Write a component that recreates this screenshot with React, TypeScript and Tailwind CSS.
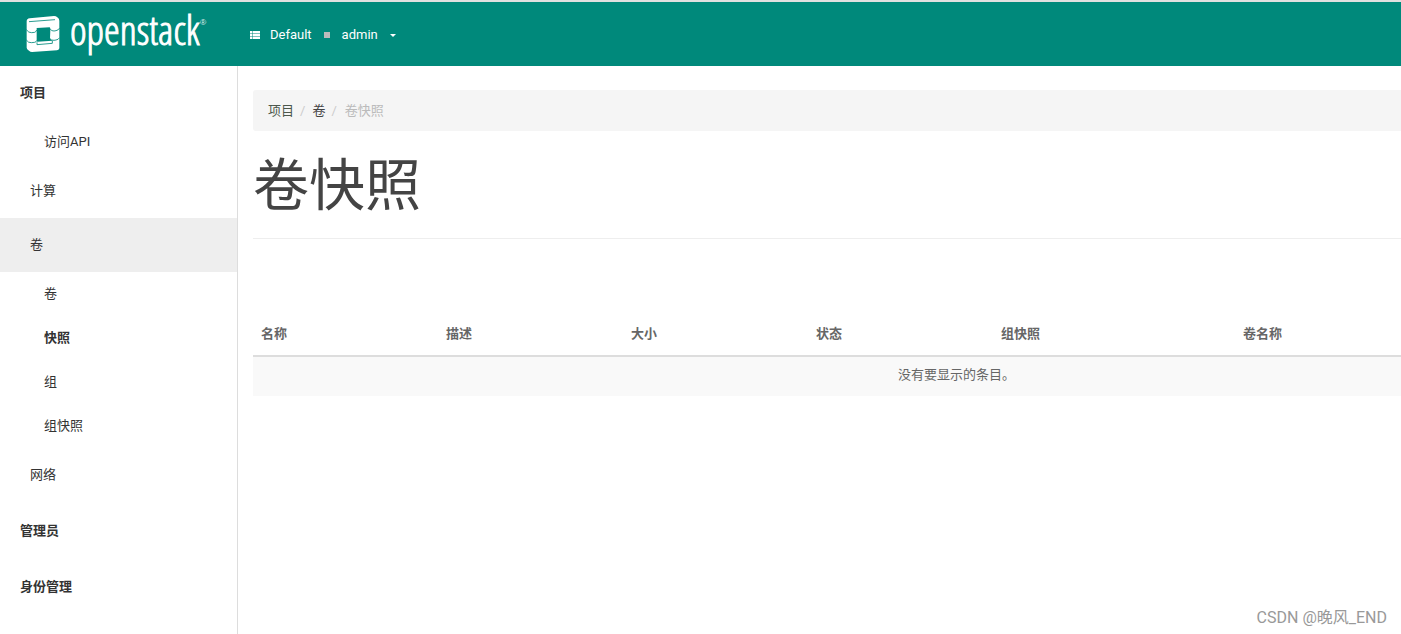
import React from 'react';

interface NavItem {
  label: string;
  kind: 'group' | 'section' | 'page';
  active?: boolean;
}

const projectItems: NavItem[] = [
  { label: '项目', kind: 'group' },
  { label: '访问API', kind: 'page' },
  { label: '计算', kind: 'section' },
  { label: '卷', kind: 'section', active: true },
  { label: '卷', kind: 'page' },
  { label: '快照', kind: 'page', active: true },
  { label: '组', kind: 'page' },
  { label: '组快照', kind: 'page' },
  { label: '网络', kind: 'section' },
];

const otherItems: NavItem[] = [
  { label: '管理员', kind: 'group' },
  { label: '身份管理', kind: 'group' },
];

const columns = [
  { label: '名称', width: 'w-[185px]' },
  { label: '描述', width: 'w-[185px]' },
  { label: '大小', width: 'w-[185px]' },
  { label: '状态', width: 'w-[185px]' },
  { label: '组快照', width: 'w-[242px]' },
  { label: '卷名称', width: '' },
];

const LogoMark: React.FC = () => (
  <svg viewBox="33 24 100 108" className="h-9 w-[34px] shrink-0" aria-hidden="true">
    <path
      fill="#fff"
      d="M34 40Q34 32 43 31L116 24Q122 24 126 28Q132 32 132 38V121Q132 126 125 127L50 132Q45 132 41 128Q34 124 34 119Z"
    />
    <path fill="#00897b" d="M64 60L103 58Q105 58 105 66L104 92L111 98L66 101L64 98Z" />
    <g fill="none" stroke="#00897b" strokeWidth="2.5">
      <path d="M41 41L119 35" />
      <path d="M33 65Q40 75 49 74L58 73Q62 72 64 66" />
      <path d="M104 62Q108 70 116 69L122 68Q129 67 133 60" />
      <path d="M33 96Q39 105 48 104L58 103Q63 102 65 97" />
      <path d="M103 91Q108 98 116 97L122 96Q129 95 133 89" />
      <path d="M65 103V110L111 106V98" />
    </g>
  </svg>
);

const Header: React.FC = () => (
  <header className="flex h-[66px] items-center border-t-2 border-[#e0e0e0] bg-[#00897b] text-white">
    <a href="#" className="ml-[26px] flex w-[188px] shrink-0 items-center gap-2.5" aria-label="openstack">
      <LogoMark />
      <span className="flex items-start pb-2 font-['Open_Sans_Condensed_Light','Roboto_Condensed','Lato',sans-serif] text-[40px] leading-9">
        <span className="[-webkit-text-stroke:1px_white]">openstack</span>
        <span className="text-[8px] leading-5">®</span>
      </span>
    </a>
    <button type="button" className="ml-9 flex items-center pt-0.5 text-[13px] leading-6">
      <svg viewBox="0 0 10 8" className="h-2 w-2.5" fill="#fff" aria-hidden="true">
        <path d="M0 0h2.5v2.3H0zM3 0h7v2.3H3zM0 2.8h2.5v2.3H0zM3 2.8h7v2.3H3zM0 5.6h2.5v2.3H0zM3 5.6h7v2.3H3z" />
      </svg>
      <span className="ml-2.5">Default</span>
      <span className="ml-3 h-1.5 w-1.5 bg-[#bbb]" />
      <span className="ml-3">admin</span>
      <svg viewBox="0 0 6 3" className="ml-3 h-[3px] w-1.5" fill="#fff" aria-hidden="true">
        <path d="M0 0h6L3 3z" />
      </svg>
    </button>
  </header>
);

const NavLink: React.FC<{ item: NavItem }> = ({ item }) => {
  const base = 'flex items-center text-[#333]';
  if (item.kind === 'group') {
    return <a href="#" className={`${base} h-[54px] pl-5 font-bold`}>{item.label}</a>;
  }
  if (item.kind === 'section') {
    return (
      <a href="#" className={`${base} h-[54px] pl-[30px] ${item.active ? 'bg-[#eee]' : ''}`}>
        {item.label}
      </a>
    );
  }
  return (
    <a href="#" className={`${base} h-11 pl-11 ${item.active ? 'font-bold' : ''}`}>
      {item.label}
    </a>
  );
};

const Sidebar: React.FC = () => (
  <nav className="w-[238px] shrink-0 border-r border-[#ddd]">
    {projectItems.map((item, index) => (
      <NavLink key={index} item={item} />
    ))}
    <div className="flex flex-col gap-0.5 pt-0.5">
      {otherItems.map(item => (
        <NavLink key={item.label} item={item} />
      ))}
    </div>
  </nav>
);

const Breadcrumb: React.FC = () => (
  <ol className="flex h-[41px] items-center rounded-l-[3px] bg-[#f5f5f5] pt-px pl-[15px]">
    <li><a href="#" className="text-[#4c584c]">项目</a></li>
    <li className="px-1.5 text-[#ccc]">/</li>
    <li className="pl-px"><a href="#" className="text-[#444]">卷</a></li>
    <li className="px-1.5 text-[#ccc]">/</li>
    <li className="pl-0.5 text-[#bbb]">卷快照</li>
  </ol>
);

export default function App() {
  return (
    <div className="flex min-h-screen flex-col bg-white font-['Roboto','Noto_Sans_CJK_SC',sans-serif] text-[13px] leading-6 text-[#666]">
      <Header />
      <div className="flex flex-1">
        <Sidebar />
        <main className="flex min-w-0 flex-1 flex-col overflow-hidden pt-6 pl-[15px]">
          <Breadcrumb />
          <h1 className="border-b border-[#eee] pt-[23px] pb-5 text-[56px] leading-[64px] text-[#444]">
            卷快照
          </h1>
          <table className="mt-[73px] w-[1407px] table-fixed border-collapse">
            <thead>
              <tr className="h-11 border-b-2 border-[#ddd]">
                {columns.map(column => (
                  <th key={column.label} className={`${column.width} px-2 text-left font-bold`}>
                    {column.label}
                  </th>
                ))}
              </tr>
            </thead>
            <tbody>
              <tr className="h-10 bg-[#f9f9f9]">
                <td colSpan={columns.length} className="px-2 pb-1 text-center">没有要显示的条目。</td>
              </tr>
            </tbody>
          </table>
          <p className="mt-auto pr-3.5 pb-1 text-right text-[16px] text-[#999]">CSDN @晚风_END</p>
        </main>
      </div>
    </div>
  );
}
